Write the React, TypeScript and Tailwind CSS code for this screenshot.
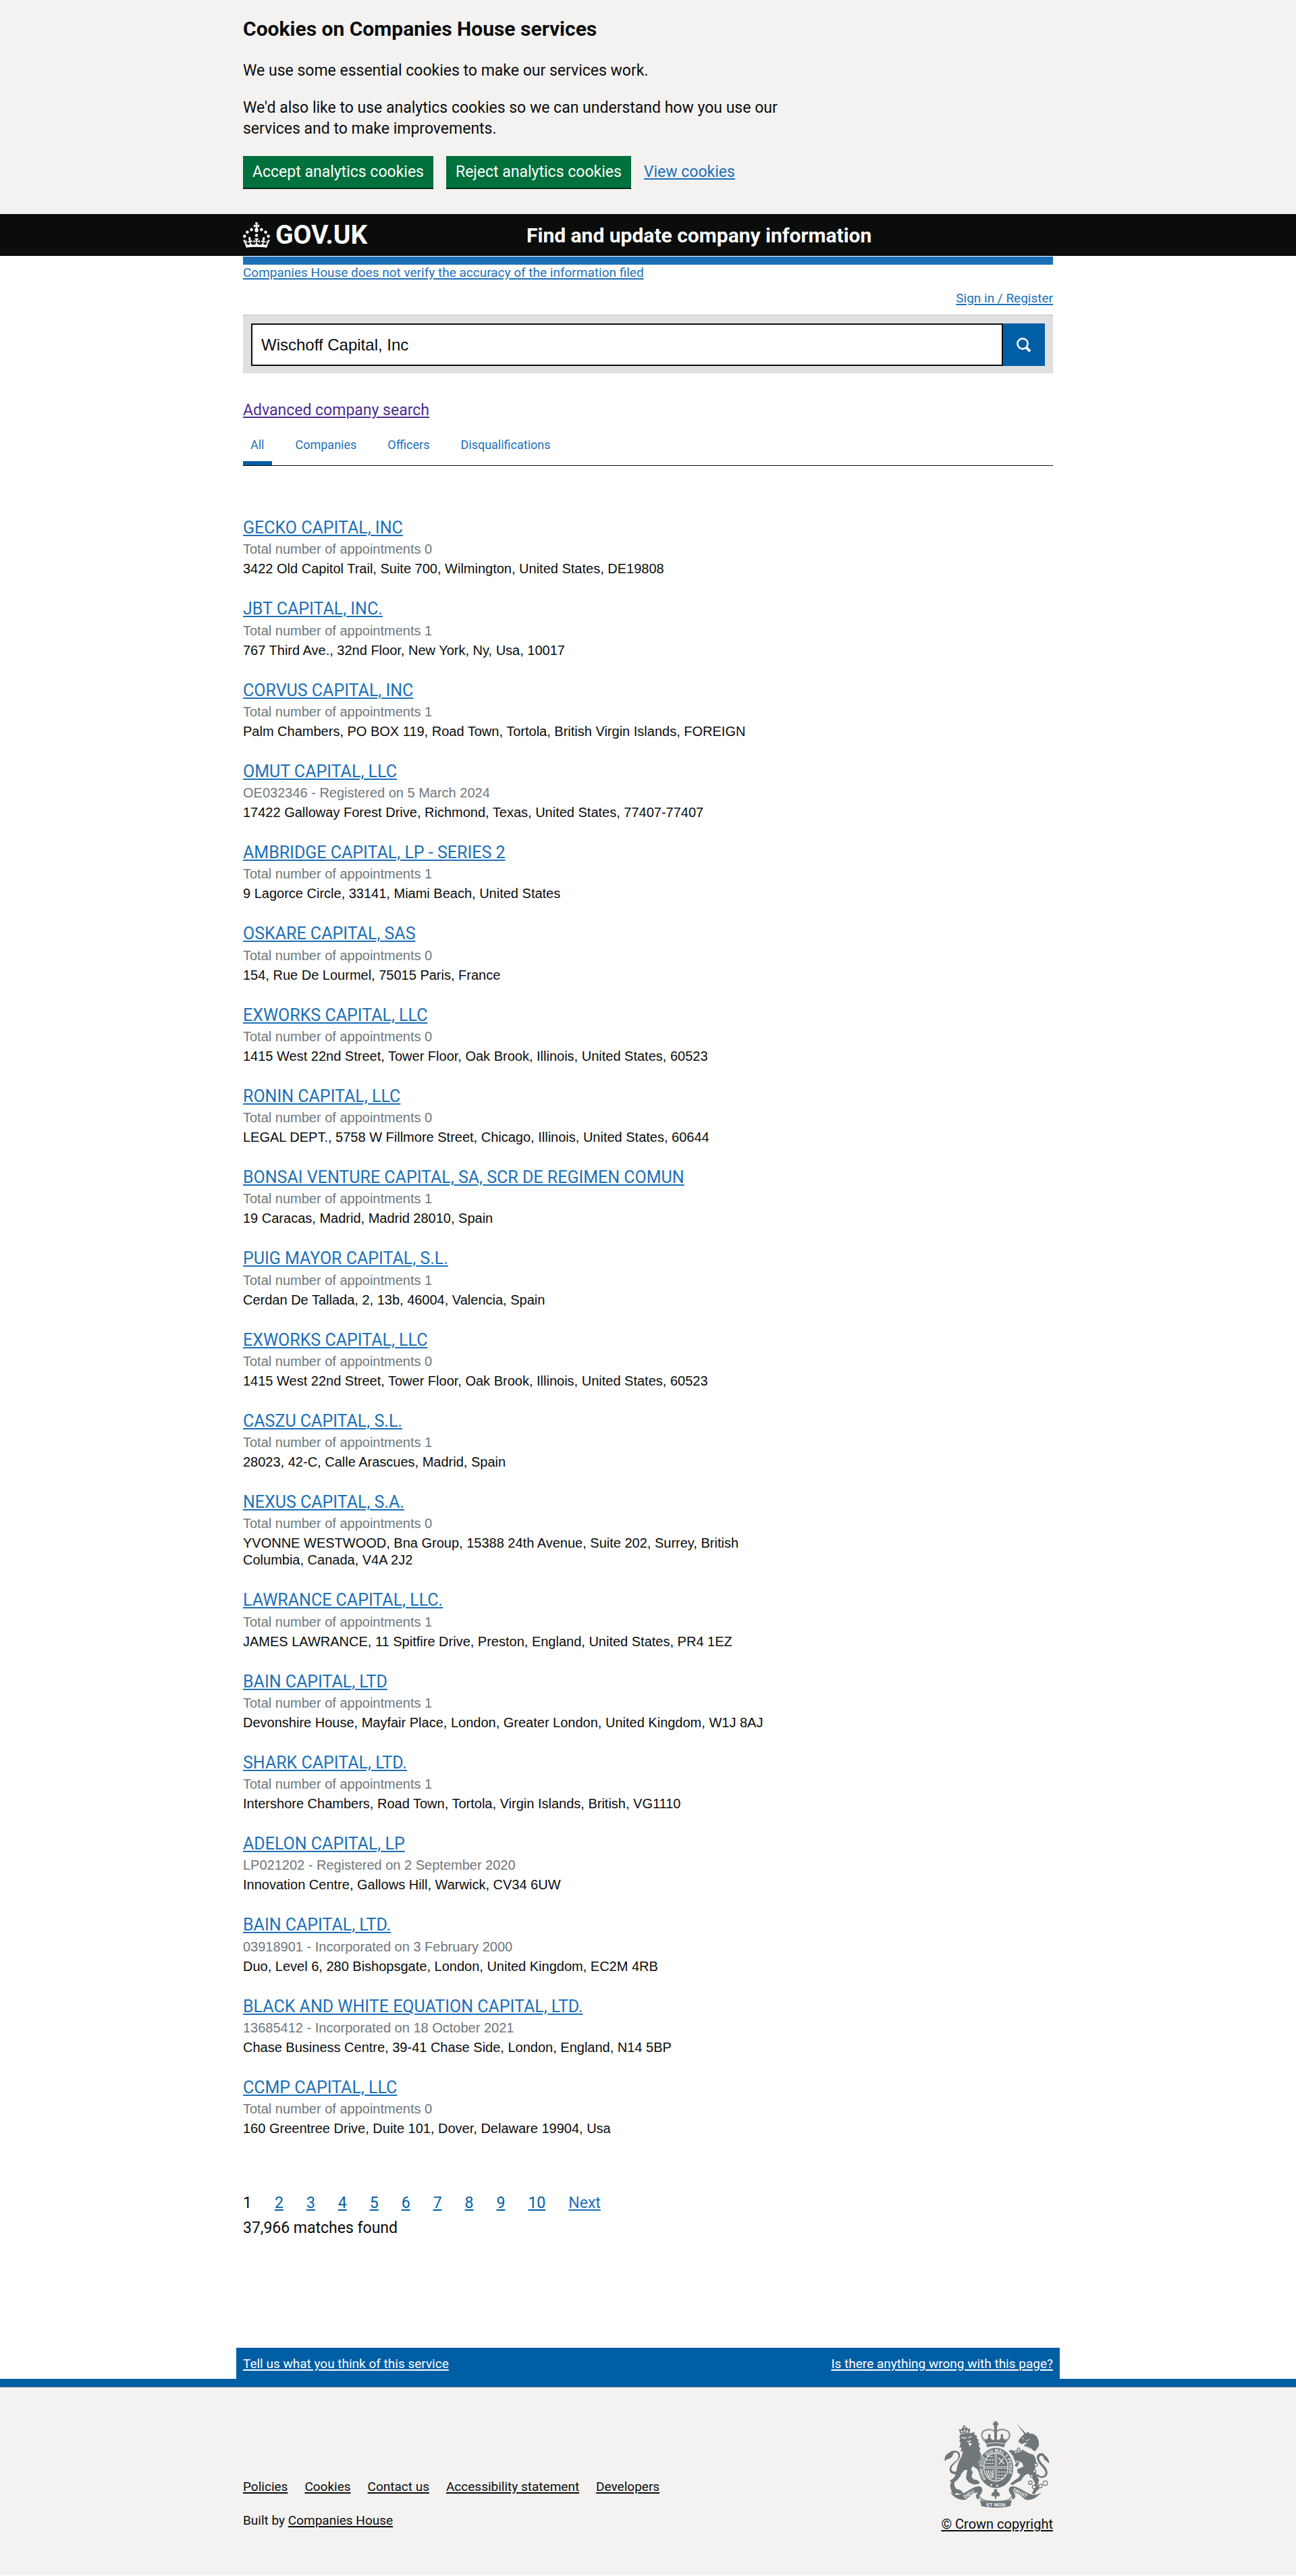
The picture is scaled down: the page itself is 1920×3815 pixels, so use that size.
import type { ReactNode } from 'react'

interface SearchResult {
  name: string
  meta: string
  address: string
}

const results: SearchResult[] = [
  { name: 'GECKO CAPITAL, INC', meta: 'Total number of appointments 0', address: '3422 Old Capitol Trail, Suite 700, Wilmington, United States, DE19808' },
  { name: 'JBT CAPITAL, INC.', meta: 'Total number of appointments 1', address: '767 Third Ave., 32nd Floor, New York, Ny, Usa, 10017' },
  { name: 'CORVUS CAPITAL, INC', meta: 'Total number of appointments 1', address: 'Palm Chambers, PO BOX 119, Road Town, Tortola, British Virgin Islands, FOREIGN' },
  { name: 'OMUT CAPITAL, LLC', meta: 'OE032346 - Registered on 5 March 2024', address: '17422 Galloway Forest Drive, Richmond, Texas, United States, 77407-77407' },
  { name: 'AMBRIDGE CAPITAL, LP - SERIES 2', meta: 'Total number of appointments 1', address: '9 Lagorce Circle, 33141, Miami Beach, United States' },
  { name: 'OSKARE CAPITAL, SAS', meta: 'Total number of appointments 0', address: '154, Rue De Lourmel, 75015 Paris, France' },
  { name: 'EXWORKS CAPITAL, LLC', meta: 'Total number of appointments 0', address: '1415 West 22nd Street, Tower Floor, Oak Brook, Illinois, United States, 60523' },
  { name: 'RONIN CAPITAL, LLC', meta: 'Total number of appointments 0', address: 'LEGAL DEPT., 5758 W Fillmore Street, Chicago, Illinois, United States, 60644' },
  { name: 'BONSAI VENTURE CAPITAL, SA, SCR DE REGIMEN COMUN', meta: 'Total number of appointments 1', address: '19 Caracas, Madrid, Madrid 28010, Spain' },
  { name: 'PUIG MAYOR CAPITAL, S.L.', meta: 'Total number of appointments 1', address: 'Cerdan De Tallada, 2, 13b, 46004, Valencia, Spain' },
  { name: 'EXWORKS CAPITAL, LLC', meta: 'Total number of appointments 0', address: '1415 West 22nd Street, Tower Floor, Oak Brook, Illinois, United States, 60523' },
  { name: 'CASZU CAPITAL, S.L.', meta: 'Total number of appointments 1', address: '28023, 42-C, Calle Arascues, Madrid, Spain' },
  { name: 'NEXUS CAPITAL, S.A.', meta: 'Total number of appointments 0', address: 'YVONNE WESTWOOD, Bna Group, 15388 24th Avenue, Suite 202, Surrey, British Columbia, Canada, V4A 2J2' },
  { name: 'LAWRANCE CAPITAL, LLC.', meta: 'Total number of appointments 1', address: 'JAMES LAWRANCE, 11 Spitfire Drive, Preston, England, United States, PR4 1EZ' },
  { name: 'BAIN CAPITAL, LTD', meta: 'Total number of appointments 1', address: 'Devonshire House, Mayfair Place, London, Greater London, United Kingdom, W1J 8AJ' },
  { name: 'SHARK CAPITAL, LTD.', meta: 'Total number of appointments 1', address: 'Intershore Chambers, Road Town, Tortola, Virgin Islands, British, VG1110' },
  { name: 'ADELON CAPITAL, LP', meta: 'LP021202 - Registered on 2 September 2020', address: 'Innovation Centre, Gallows Hill, Warwick, CV34 6UW' },
  { name: 'BAIN CAPITAL, LTD.', meta: '03918901 - Incorporated on 3 February 2000', address: 'Duo, Level 6, 280 Bishopsgate, London, United Kingdom, EC2M 4RB' },
  { name: 'BLACK AND WHITE EQUATION CAPITAL, LTD.', meta: '13685412 - Incorporated on 18 October 2021', address: 'Chase Business Centre, 39-41 Chase Side, London, England, N14 5BP' },
  { name: 'CCMP CAPITAL, LLC', meta: 'Total number of appointments 0', address: '160 Greentree Drive, Duite 101, Dover, Delaware 19904, Usa' },
]

const tabs = ['All', 'Companies', 'Officers', 'Disqualifications']
const pages = ['2', '3', '4', '5', '6', '7', '8', '9', '10']
const footerLinks = ['Policies', 'Cookies', 'Contact us', 'Accessibility statement', 'Developers']

function Container({ children, className = '' }: { children: ReactNode; className?: string }) {
  return <div className={`mx-auto w-full max-w-[1200px] ${className}`}>{children}</div>
}

function TextLink({ href, children, className = 'text-[#1d70b8]' }: { href: string; children: ReactNode; className?: string }) {
  return (
    <a href={href} className={`underline decoration-2 underline-offset-2 ${className}`}>
      {children}
    </a>
  )
}

function CrownLogo() {
  return (
    <svg viewBox="0 0 32 30" className="h-[38px] w-10 fill-white" aria-hidden="true">
      <path d="M22.6 10.4c-1 .4-2-.1-2.4-1-.4-.9.1-2 1-2.4.9-.4 2 .1 2.4 1s-.1 2-1 2.4m-5.9 6.7c-.9.4-2-.1-2.4-1-.4-.9.1-2 1-2.4.9-.4 2 .1 2.4 1s-.1 2-1 2.4m10.8-3.7c-1 .4-2-.1-2.4-1-.4-.9.1-2 1-2.4.9-.4 2 .1 2.4 1s0 2-1 2.4m3.3 4.8c-1 .4-2-.1-2.4-1-.4-.9.1-2 1-2.4.9-.4 2 .1 2.4 1s-.1 2-1 2.4M17 4.7l2.3 1.2V2.5l-2.3.7-.2-.2.9-3h-3.4l.9 3-.2.2c-.1.1-2.3-.7-2.3-.7v3.4L15 4.7c.1.1.1.2.2.2l-1.3 4c-.1.2-.1.4-.1.6 0 1.1.8 2 1.9 2.2h.7c1-.2 1.9-1.1 1.9-2.1 0-.2 0-.4-.1-.6l-1.3-4c-.1-.2 0-.2.1-.3m-7.6 5.7c.9.4 2-.1 2.4-1 .4-.9-.1-2-1-2.4-.9-.4-2 .1-2.4 1s0 2 1 2.4m-5 3c.9.4 2-.1 2.4-1 .4-.9-.1-2-1-2.4-.9-.4-2 .1-2.4 1s.1 2 1 2.4m-3.2 4.8c.9.4 2-.1 2.4-1 .4-.9-.1-2-1-2.4-.9-.4-2 .1-2.4 1s0 2 1 2.4m14.8 11c4.4 0 8.6.3 12.3.8 1.1-4.5 2.4-7 3.7-8.8l-2.5-.9c.2 1.3.3 1.9 0 2.7-.4-.4-.8-1.1-1.1-2.3l-1.2 4c.7-.5 1.3-.8 2-.9-1.1 2.5-2.6 3.1-3.5 3-1.1-.2-1.7-1.2-1.5-2.1.3-1.2 1.5-1.5 2.1-.1 1.1-2.3-.8-3-2-2.3 1.9-1.9 2.1-3.5.6-5.6-2.1 1.6-2.1 3.2-1.2 5.5-1.2-1.4-3.2-.6-2.5 1.6.9-1.4 2.1-.5 1.9.8-.2 1.1-1.7 2.1-3.5 1.9-2.7-.2-2.9-2.1-2.9-3.6.7-.1 1.9.5 2.9 1.9l.4-4.3c-1.1 1.1-2.1 1.4-3.2 1.4.4-1.2 2.1-3 2.1-3h-5.4s1.7 1.9 2.1 3c-1.1 0-2.1-.2-3.2-1.4l.4 4.3c1-1.4 2.2-2 2.9-1.9-.1 1.5-.2 3.4-2.9 3.6-1.9.2-3.4-.8-3.5-1.9-.2-1.3 1-2.2 1.9-.8.7-2.3-1.2-3-2.5-1.6.9-2.2.9-3.9-1.2-5.5-1.5 2-1.3 3.7.6 5.6-1.2-.7-3.1 0-2 2.3.6-1.4 1.8-1.1 2.1.1.2.9-.3 1.9-1.5 2.1-.9.2-2.4-.5-3.5-3 .6 0 1.2.3 2 .9l-1.2-4c-.3 1.1-.7 1.9-1.1 2.3-.3-.8-.2-1.4 0-2.7l-2.9.9C1.3 23 2.6 25.5 3.7 30c3.7-.5 7.9-.8 12.3-.8" />
    </svg>
  )
}

function SearchIcon() {
  return (
    <svg viewBox="0 0 22 22" className="size-[22px]" fill="none" stroke="currentColor" aria-hidden="true">
      <circle cx="9" cy="9" r="7.6" strokeWidth="2.6" />
      <path d="M14.4 14.6 20 20.4" strokeWidth="4" />
    </svg>
  )
}

function RoyalArms() {
  return (
    <svg viewBox="60 50 468 386" className="mx-auto h-32 w-[156px]" fill="#6f777b" aria-hidden="true">
      {/* lion */}
      <path d="M131 110 L124 84 L134 88 L140 76 L149 82 L158 75 L164 85 L174 80 L172 104 L186 100 L194 98 L193 108 L207 118 L202 122 L214 136 L208 138 L218 154 L211 156 L221 176 L215 178 L224 200 L218 220 L210 236 L222 248 L216 262 L226 282 L216 280 L204 262 L186 250 L178 262 L186 278 L180 296 L188 308 L206 312 L218 322 L212 330 L190 332 L168 322 L156 306 L158 284 L162 268 L150 266 L136 282 L130 296 L118 310 L104 322 L104 338 L112 352 L124 354 L138 362 L144 374 L128 374 L112 370 L104 378 L94 372 L88 352 L84 336 L90 322 L82 316 L96 306 L104 300 L112 276 L116 252 L124 228 L136 206 L142 184 L132 186 L136 166 L126 168 L132 146 L126 138 L130 124 L124 120 Z" />
      <path d="M112 286 C84 286 76 270 86 250 C98 232 122 224 122 206 C122 188 106 184 99 194 C96 206 90 214 76 218 C68 220 64 224 61 230 C58 208 66 198 80 190 C90 182 104 178 114 182 C130 186 132 202 126 214 C116 232 96 240 91 258 C88 270 96 276 114 274 Z" />
      <path d="M136 121 l14 4 l8 -2 M166 122 l14 -4" fill="none" stroke="#f3f2f1" strokeWidth="4" />
      <path d="M160 138 l8 4 l10 -6 M168 148 l5 12 l7 -11 Z" fill="#f3f2f1" stroke="#f3f2f1" strokeWidth="3" />
      <circle cx="137" cy="96" r="4" fill="#f3f2f1" />
      <circle cx="149" cy="92" r="4" fill="#f3f2f1" />
      <circle cx="161" cy="94" r="4" fill="#f3f2f1" />
      <path d="M128 107 L172 98" stroke="#f3f2f1" strokeWidth="2" />
      <circle cx="148" cy="73" r="5" />

      {/* unicorn */}
      <path d="M381 60 L424 104 L432 96 L440 104 L456 106 L472 118 L480 136 L482 158 L474 170 L464 184 L450 176 L428 166 L414 160 L420 152 L432 148 L420 146 L404 152 L390 142 L392 132 L402 120 L410 112 L416 106 Z" />
      <path d="M408 176 L432 190 L458 200 L466 214 L470 236 L464 262 L470 286 L482 312 L476 334 L484 350 L470 362 L462 376 L450 372 L460 350 L464 326 L450 300 L434 284 L422 288 L410 300 L402 314 L384 322 L364 334 L352 330 L372 314 L392 300 L398 286 L386 280 L384 264 L398 258 L412 252 L408 238 L392 226 L392 242 L382 254 L372 246 L382 236 L370 220 L366 206 L352 188 L346 180 L364 178 L380 190 L396 186 Z" />
      <path d="M474 284 C486 300 508 298 511 280 C508 256 476 242 472 214 C470 192 498 184 508 202 C520 210 526 220 528 238 C514 226 504 222 500 208 C494 198 482 204 482 216 C488 240 520 250 520 282 C514 306 486 308 472 292 Z" />
      <path d="M408 164 L460 192" stroke="#f3f2f1" strokeWidth="4" />
      <path d="M420 168 l4 -8 l6 12 l5 -8 l6 13 l5 -8 l5 12" fill="none" stroke="#f3f2f1" strokeWidth="3" />
      <path d="M406 126 l8 2 M424 138 l16 -8" stroke="#f3f2f1" strokeWidth="3" />
      <g fill="#f3f2f1" stroke="#6f777b" strokeWidth="4">
        <circle cx="391" cy="175" r="6" />
        <circle cx="378" cy="188" r="6" />
        <circle cx="384" cy="230" r="6" />
        <circle cx="468" cy="244" r="7" />
        <circle cx="462" cy="273" r="6" />
        <circle cx="449" cy="294" r="6" />
        <circle cx="443" cy="324" r="8" />
        <circle cx="460" cy="343" r="8" />
        <circle cx="488" cy="339" r="8" />
        <circle cx="510" cy="326" r="10" />
      </g>

      {/* crown */}
      <path d="M280 50 h16 l-3 8 l7 -3 v14 l-7 -3 l3 12 h-16 l3 -12 l-7 3 v-14 l7 3 Z" />
      <path d="M244 142 C218 120 222 92 248 88 C264 84 280 88 288 100 C296 88 312 84 328 88 C356 94 358 120 332 142" fill="none" stroke="#6f777b" strokeWidth="7" strokeDasharray="6 2" />
      <path d="M282 78 h12 v48 h-12 Z" />
      <path d="M244 146 L238 126 L248 132 L256 120 L254 112 L260 104 L266 112 L264 122 L272 132 L280 134 L288 118 L296 134 L304 132 L312 122 L310 112 L316 104 L322 112 L320 120 L328 132 L338 126 L332 146 L326 166 C302 158 274 158 250 166 Z" />
      <path d="M247 151 C272 144 304 144 329 151" fill="none" stroke="#f3f2f1" strokeWidth="3" />

      {/* garter and shield */}
      <ellipse cx="289" cy="258" rx="78" ry="90" />
      <ellipse cx="289" cy="254" rx="56" ry="65" fill="#f3f2f1" />
      <ellipse cx="289" cy="254" rx="52" ry="61" />
      <path d="M289 193 V315 M237 256 H341" stroke="#f3f2f1" strokeWidth="9" />
      <path d="M289 193 V315 M237 256 H341" stroke="#6f777b" strokeWidth="4" />
      <path d="M246 222 h34 M244 238 h34 M252 208 h28 M298 276 h36 M298 290 h32 M298 304 h22" stroke="#f3f2f1" strokeWidth="4" strokeDasharray="9 4" />
      <path d="M300 212 l26 28 M324 214 l-22 28 M246 270 q6 32 28 34 M254 268 q4 24 20 28 M264 268 q2 14 10 18 M276 266 v36" fill="none" stroke="#f3f2f1" strokeWidth="4" />
      <path id="garter-arc" d="M246 306 A60 70 0 1 1 332 306" fill="none" />
      <text fill="#f3f2f1" fontFamily="Liberation Sans, sans-serif" fontWeight="bold" fontSize="20">
        <textPath href="#garter-arc">HONI SOIT QUI MAL Y PENSE</textPath>
      </text>
      <circle cx="268" cy="334" r="4" fill="#f3f2f1" />
      <circle cx="295" cy="337" r="4" fill="#f3f2f1" />

      {/* motto scroll */}
      <path d="M84 366 C104 384 128 380 150 368 C172 356 186 344 208 340 C222 338 232 348 228 362 C224 376 214 378 214 392 L214 400 C196 394 196 376 210 368 C190 366 174 384 154 400 C130 404 104 394 84 366 Z" />
      <path d="M492 366 C472 384 450 380 428 368 C406 356 390 344 368 340 C354 338 344 348 348 362 C352 376 362 378 362 392 L362 400 C380 394 380 376 366 368 C386 366 402 384 422 400 C446 404 472 394 492 366 Z" />
      <path d="M218 400 C240 410 264 408 288 408 C312 408 336 408 360 400 L354 428 C332 438 244 438 224 428 Z" />
      <path d="M216 384 C222 402 244 408 288 407 C332 408 354 402 360 384" fill="none" stroke="#6f777b" strokeWidth="4" />
      <g fill="#f3f2f1" fontFamily="Liberation Sans, sans-serif" fontWeight="bold" fontSize="22">
        <text x="289" y="429" textAnchor="middle">ET MON</text>
        <text transform="translate(150 395) rotate(-31)">DIEU</text>
        <text transform="translate(364 360) rotate(28)">DROIT</text>
      </g>
      <path d="M282 352 h12 v10 l8 6 l6 10 l-6 8 l-8 -4 l-6 20 l-6 -20 l-8 4 l-6 -8 l6 -10 l8 -6 Z" />
    </svg>
  )
}

export default function App() {
  return (
    <div className="min-h-screen bg-white font-[Roboto,'Liberation_Sans',sans-serif] text-[23px] leading-[31px] text-[#0b0c0c]">
      <section className="bg-[#f3f2f1]" aria-label="Cookies on Companies House services">
        <Container className="pt-[25px] pb-[39px]">
          <h2 className="mb-7 text-[30px] leading-9 font-bold">Cookies on Companies House services</h2>
          <div className="max-w-[800px] space-y-6">
            <p>We use some essential cookies to make our services work.</p>
            <p>We'd also like to use analytics cookies so we can understand how you use our services and to make improvements.</p>
          </div>
          <div className="mt-[25px] flex items-center gap-[19px]">
            <button type="button" className="bg-[#00703c] px-[14px] py-2 text-white shadow-[0_2px_0_#002d18]">Accept analytics cookies</button>
            <button type="button" className="bg-[#00703c] px-[14px] py-2 text-white shadow-[0_2px_0_#002d18]">Reject analytics cookies</button>
            <TextLink href="#cookies">View cookies</TextLink>
          </div>
        </Container>
      </section>

      <header className="bg-[#0b0c0c] text-white">
        <Container className="flex h-[62px] items-center">
          <a href="#home" className="flex w-[420px] items-center gap-2 text-[39px] leading-none font-bold">
            <CrownLogo />
            <span>GOV.UK</span>
          </a>
          <a href="#service" className="text-[30px] font-bold">Find and update company information</a>
        </Container>
      </header>

      <Container>
        <div className="mt-px border-t-[12px] border-[#1d70b8] text-[19px] leading-6">
          <TextLink href="#accuracy">Companies House does not verify the accuracy of the information filed</TextLink>
        </div>
        <div className="mt-3 flex justify-end text-[19px] leading-7">
          <TextLink href="#signin">Sign in / Register</TextLink>
        </div>

        <form className="mt-[10px] flex border-t border-[#bfc1c3] bg-[#dee0e2] px-3 pt-3 pb-[11px]">
          <input
            type="text"
            aria-label="Search companies and officers"
            defaultValue="Wischoff Capital, Inc"
            className="h-[63px] min-w-0 flex-1 rounded-none border-2 border-[#0b0c0c] bg-white px-[13px] font-['Liberation_Sans',Arial,sans-serif] text-2xl outline-none"
          />
          <button type="submit" aria-label="Search" className="flex w-[62px] items-center justify-center bg-[#005ea5] text-white">
            <SearchIcon />
          </button>
        </form>

        <p className="mt-[39px]">
          <TextLink href="#advanced" className="text-[#4c2c92]">Advanced company search</TextLink>
        </p>

        <nav className="mt-5 flex gap-6 border-b border-[#0b0c0c] text-lg leading-[25px]" aria-label="Result type">
          {tabs.map((tab, i) => (
            <a
              key={tab}
              href={`#${tab.toLowerCase()}`}
              className={i === 0 ? 'border-b-[6px] border-[#005ea5] px-[11px] pt-[3px] pb-3 text-[#1d70b8]' : 'px-[11px] pt-[3px] pb-[18px] text-[#1d70b8]'}
            >
              {tab}
            </a>
          ))}
        </nav>

        <ul className="mt-[76px] max-w-[780px]">
          {results.map((result, i) => (
            <li key={i} className="mb-[31px] font-['Liberation_Sans',Arial,sans-serif] text-xl leading-[25px]">
              <h3 className="mb-1 font-[Roboto,'Liberation_Sans',sans-serif] text-[25px] leading-tight">
                <TextLink href={`#result-${i + 1}`}>{result.name}</TextLink>
              </h3>
              <p className="mb-1 text-[#6f777b]">{result.meta}</p>
              <p>{result.address}</p>
            </li>
          ))}
        </ul>

        <nav aria-label="Pagination" className="mt-[82px]">
          <ul className="flex gap-[34px]">
            <li>1</li>
            {pages.map((page) => (
              <li key={page}>
                <TextLink href={`#page-${page}`} className="text-[#005ea5]">{page}</TextLink>
              </li>
            ))}
            <li>
              <TextLink href="#next">Next</TextLink>
            </li>
          </ul>
          <p className="mt-[6px]">37,966 matches found</p>
        </nav>
      </Container>

      <div className="mx-auto mt-[162px] flex h-[46px] w-full max-w-[1220px] items-center justify-between bg-[#005ea5] px-[10px] text-[19px]">
        <TextLink href="#feedback" className="text-white">Tell us what you think of this service</TextLink>
        <TextLink href="#problem" className="text-white">Is there anything wrong with this page?</TextLink>
      </div>

      <footer className="border-t-[12px] border-[#005ea5] bg-[#f3f2f1] text-[19px] leading-[25px]">
        <div className="border-t border-[#a1acb2]">
          <Container className="flex items-end justify-between pt-[50px] pb-[63px]">
            <div className="pb-[6px]">
              <ul className="mb-[25px] flex gap-[25px]">
                {footerLinks.map((link) => (
                  <li key={link}>
                    <TextLink href={`#${link.toLowerCase().replace(' ', '-')}`} className="text-[#0b0c0c]">{link}</TextLink>
                  </li>
                ))}
              </ul>
              <p>
                Built by <TextLink href="#companies-house" className="text-[#0b0c0c]">Companies House</TextLink>
              </p>
            </div>
            <TextLink href="#copyright" className="text-center text-xl leading-[25px] text-[#0b0c0c]">
              <RoyalArms />
              <span className="mt-3 block">© Crown copyright</span>
            </TextLink>
          </Container>
        </div>
      </footer>
    </div>
  )
}
